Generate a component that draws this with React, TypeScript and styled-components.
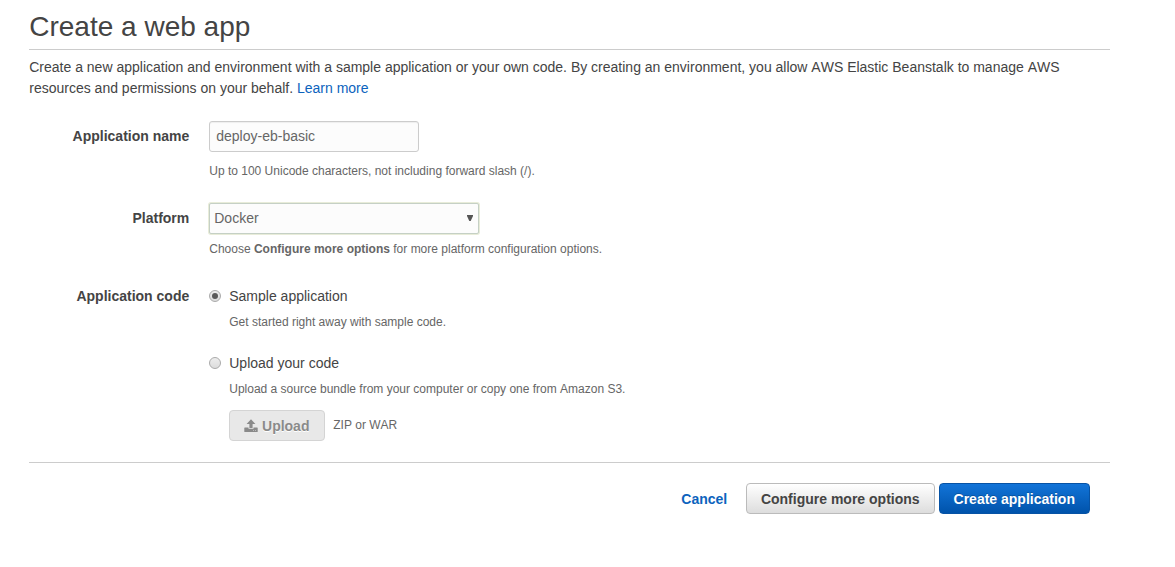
import React, { useState } from 'react';
import styled, { createGlobalStyle, css } from 'styled-components';

const GlobalStyle = createGlobalStyle`
  body {
    margin: 0;
    background: #fff;
    color: #444;
    font: 14px/21px "Liberation Sans", Arial, sans-serif;
    font-kerning: none;
  }
  *, *::before, *::after { box-sizing: border-box; }
`;

const Page = styled.main`
  width: 1081px;
  margin-left: 29.25px;
  padding-top: 7px;
`;

const Title = styled.h1`
  margin: 0;
  height: 43px;
  border-bottom: 1px solid #ccc;
  font-size: 28px;
  font-weight: 400;
  line-height: 39px;
`;

const Intro = styled.p`
  margin: 7px 0 22px;
`;

const Link = styled.a<{ $strong?: boolean }>`
  color: #0c63bd;
  text-decoration: none;
  font-weight: ${(p) => (p.$strong ? 700 : 400)};
`;

const Row = styled.div<{ $height: number }>`
  display: grid;
  grid-template-columns: 160px 1fr;
  column-gap: 20px;
  height: ${(p) => p.$height}px;
`;

const Label = styled.label`
  font-weight: 700;
  line-height: 31px;
  text-align: right;
`;

const Field = styled.div`
  display: flex;
  flex-direction: column;
  align-items: flex-start;
`;

const Hint = styled.div<{ $gap: number }>`
  margin-top: ${(p) => p.$gap}px;
  color: #666;
  font-size: 12px;
  line-height: 18px;
`;

const control = css`
  height: 31px;
  border-radius: 3px;
  background: #fcfcfc;
  color: #666;
  font-family: inherit;
  font-size: inherit;
  outline: none;
`;

const TextInput = styled.input`
  ${control}
  width: 210px;
  padding: 0 6px 1px;
  border: 1px solid #ccc;
  box-shadow: inset 0 1px 1px rgba(0, 0, 0, 0.06);
`;

const SelectBox = styled.div`
  ${control}
  display: flex;
  align-items: center;
  justify-content: space-between;
  width: 270px;
  padding: 0 5px 0 4px;
  border: 1px solid #c5d0c5;
  border-radius: 2px;
  box-shadow: 0 0 0 1px #e8ecd9;
`;

const Caret = styled.svg`
  width: 6px;
  height: 6px;
  margin-bottom: 2px;
  fill: #555;
`;

const Choice = styled.label`
  display: flex;
  align-items: center;
  height: 31px;
  gap: 8px;
`;

const Radio = styled.input`
  appearance: none;
  display: grid;
  place-items: center;
  width: 12px;
  height: 12px;
  margin: 0 0 1px;
  border: 1px solid #aaa;
  border-radius: 50%;
  background: linear-gradient(#ededed, #dcdcdc);

  &:checked::before {
    content: "";
    width: 6px;
    height: 6px;
    border-radius: 50%;
    background: #5a5a5a;
  }
`;

const ChoiceBody = styled.div<{ $height: number }>`
  height: ${(p) => p.$height}px;
  padding-left: 20px;
`;

const UploadLine = styled.div`
  display: flex;
  align-items: center;
  gap: 8px;
  margin-top: 12px;
  color: #666;
  font-size: 12px;
`;

const variants = {
  normal: css`
    border-color: #bbb;
    background: linear-gradient(#fff, #ddd);
    color: #444;
  `,
  primary: css`
    border-color: #0753a5;
    background: linear-gradient(#1274d8, #0053ab);
    color: #fff;
    text-shadow: 0 -1px 0 rgba(0, 0, 0, 0.2);
  `,
  disabled: css`
    border-color: #d4d4d4;
    background: #e8e8e8;
    color: #8a8a8a;
    text-shadow: 0 1px 0 #fff;
  `,
};

const Button = styled.button<{ $variant: keyof typeof variants; $width: number }>`
  display: flex;
  align-items: center;
  justify-content: center;
  gap: 4px;
  width: ${(p) => p.$width}px;
  height: 31px;
  padding: 1px 1px 0 0;
  border: 1px solid;
  border-radius: 4px;
  font: 700 14px/21px "Liberation Sans", Arial, sans-serif;
  font-kerning: none;
  white-space: nowrap;
  ${(p) => variants[p.$variant]}
`;

const Hinted = styled.span`
  line-height: 18px;
  padding-bottom: 2px;
`;

const Footer = styled.footer`
  display: flex;
  align-items: center;
  justify-content: flex-end;
  gap: 4px;
  padding: 20px 20px 0 0;
  border-top: 1px solid #ccc;

  ${Link} { margin: 1px 15px 0 0; }
`;

const UploadIcon = () => (
  <svg width="14" height="14" viewBox="0 0 14 14" fill="currentColor" aria-hidden="true">
    <path d="M7 .3 11.4 5H8.6V9H5.4V5H2.6Z" />
    <path fillRule="evenodd" d="M.8 8.6H4.5V9.8H9.5V8.6H13.2Q13.7 8.6 13.7 9.1V12.5Q13.7 13 13.2 13H.8Q.3 13 .3 12.5V9.1Q.3 8.6 .8 8.6ZM9.3 11V11.7H10V11ZM11.3 11V11.7H12V11Z" />
  </svg>
);

export default function App() {
  const [name, setName] = useState('deploy-eb-basic');
  const [source, setSource] = useState('sample');
  return (
    <>
      <GlobalStyle />
      <Page>
        <Title>Create a web app</Title>
        <Intro>
          Create a new application and environment with a sample application or your own code. By creating an
          environment, you allow AWS Elastic Beanstalk to manage AWS resources and permissions on your behalf.{' '}
          <Link href="#">Learn more</Link>
        </Intro>
        <Row $height={82}>
          <Label htmlFor="name">Application name</Label>
          <Field>
            <TextInput id="name" value={name} onChange={(e) => setName(e.target.value)} />
            <Hint $gap={10}>Up to 100 Unicode characters, not including forward slash (/).</Hint>
          </Field>
        </Row>
        <Row $height={78}>
          <Label>Platform</Label>
          <Field>
            <SelectBox role="combobox" tabIndex={0}>
              Docker
              <Caret viewBox="0 0 6 6"><path d="M0 0H6V1L3.7 6H2.3L0 1Z" /></Caret>
            </SelectBox>
            <Hint $gap={6}>
              Choose <b>Configure more options</b> for more platform configuration options.
            </Hint>
          </Field>
        </Row>
        <Row $height={181}>
          <Label>Application code</Label>
          <div>
            <Choice>
              <Radio type="radio" name="source" checked={source === 'sample'} onChange={() => setSource('sample')} />
              Sample application
            </Choice>
            <ChoiceBody $height={35}>
              <Hint $gap={1}>Get started right away with sample code.</Hint>
            </ChoiceBody>
            <Choice>
              <Radio type="radio" name="source" checked={source === 'upload'} onChange={() => setSource('upload')} />
              Upload your code
            </Choice>
            <ChoiceBody $height={84}>
              <Hint $gap={1}>Upload a source bundle from your computer or copy one from Amazon S3.</Hint>
              <UploadLine>
                <Button $variant="disabled" $width={96} disabled>
                  <UploadIcon />
                  Upload
                </Button>
                <Hinted>ZIP or WAR</Hinted>
              </UploadLine>
            </ChoiceBody>
          </div>
        </Row>
        <Footer>
          <Link href="#" $strong>Cancel</Link>
          <Button $variant="normal" $width={189}>Configure more options</Button>
          <Button $variant="primary" $width={151}>Create application</Button>
        </Footer>
      </Page>
    </>
  );
}
